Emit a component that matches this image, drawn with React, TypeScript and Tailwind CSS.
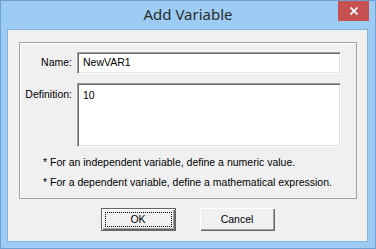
export default function App() {
  return (
    <div className="w-[376px] h-[249px] bg-[#9ccbf3] border border-[#6f9fd3] flex flex-col font-['Liberation_Sans',Arial,sans-serif] text-[10.5px] text-black select-none">
      {/* title bar */}
      <div className="relative h-[28px] flex items-center justify-center shrink-0">
        <span className="font-['Noto_Sans',sans-serif] text-[15px] text-[#2b2b2b] leading-none -mt-[1px]">
          Add Variable
        </span>
        <button className="absolute right-[6px] top-0 w-[31px] h-[20px] bg-[#c75050] flex items-center justify-center">
          <svg width="8" height="8" viewBox="0 0 8 8">
            <path d="M0.5 0.5 L7.5 7.5 M7.5 0.5 L0.5 7.5" stroke="#fff" strokeWidth="1.8" fill="none" />
          </svg>
        </button>
      </div>

      {/* client area */}
      <div className="flex-1 ml-[6px] mr-[7px] mb-[6px] border border-[#83b3df] bg-[#f0f0f0] flex flex-col">
        <div className="mt-[12px] ml-[11px] mr-[10px] h-[157px] border border-[#a0a0a0] shadow-[inset_1px_1px_0_#fff] pt-[9px] pr-[15px] flex flex-col">
          <div className="flex items-center h-[22px]">
            <label className="w-[57px] text-right pr-[5px]">Name:</label>
            <div className="flex-1 h-[22px] bg-white border border-t-[#a0a0a0] border-l-[#a0a0a0] border-b-white border-r-white shadow-[inset_1px_1px_0_#696969,inset_-1px_-1px_0_#e3e3e3] flex items-center pl-[5px]">
              NewVAR1
            </div>
          </div>
          <div className="flex mt-[9px]">
            <label className="w-[57px] text-right pr-[5px] pt-[4px]">Definition:</label>
            <div className="flex-1 h-[64px] bg-white border border-t-[#a0a0a0] border-l-[#a0a0a0] border-b-white border-r-white shadow-[inset_1px_1px_0_#696969,inset_-1px_-1px_0_#e3e3e3] pl-[5px] pt-[4px]">
              10
            </div>
          </div>
          <div className="pl-[23px] mt-[9px] flex flex-col gap-[7px] leading-[13px] whitespace-nowrap">
            <span>* For an independent variable, define a numeric value.</span>
            <span>* For a dependent variable, define a mathematical expression.</span>
          </div>
        </div>

        <div className="flex justify-center gap-[24px] mt-[9px]">
          <button className="w-[75px] h-[23px] border border-[#646464] bg-[#f0f0f0] shadow-[inset_1px_1px_0_#fff,inset_-1px_-1px_0_#696969,inset_-2px_-2px_0_#a0a0a0] p-[3px]">
            <div className="w-full h-full border border-dotted border-black flex items-center justify-center">OK</div>
          </button>
          <button className="w-[75px] h-[23px] bg-[#f0f0f0] shadow-[inset_1px_1px_0_#fff,inset_-1px_-1px_0_#696969,inset_-2px_-2px_0_#a0a0a0] flex items-center justify-center">
            Cancel
          </button>
        </div>
      </div>
    </div>
  );
}
